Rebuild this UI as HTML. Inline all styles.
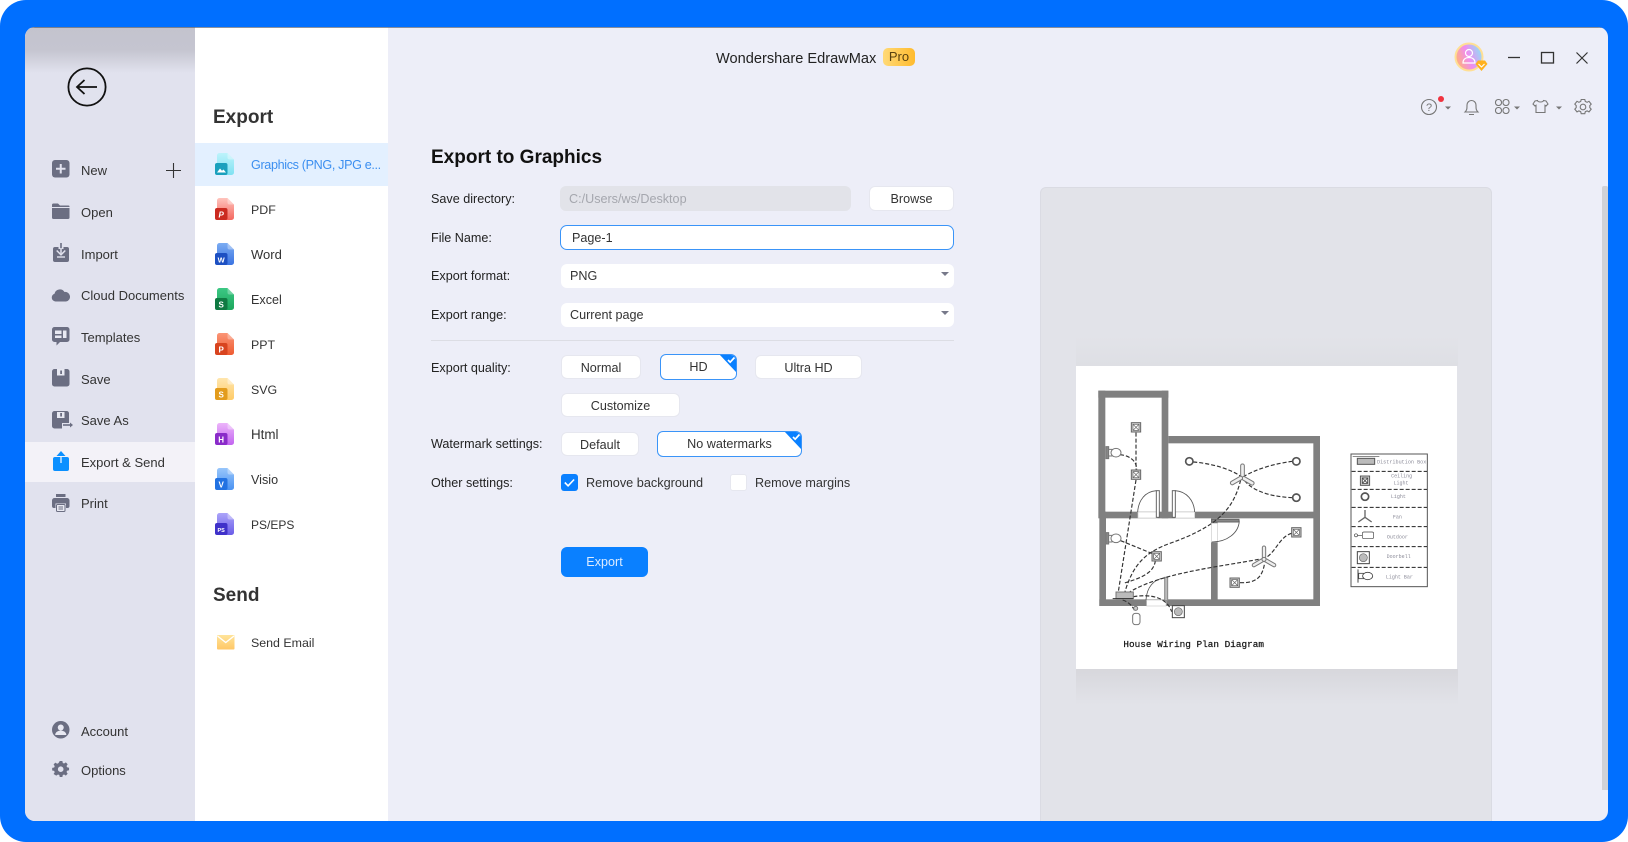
<!DOCTYPE html>
<html><head><meta charset="utf-8"><title>Export to Graphics</title>
<style>
html,body{margin:0;padding:0;background:#fff}
body{width:1628px;height:842px;overflow:hidden;position:relative;font-family:"Liberation Sans","DejaVu Sans",sans-serif;color:#333}
#frame{position:absolute;left:0;top:0;width:1628px;height:842px;background:#006fff;border-radius:26px}
#win{position:absolute;left:25px;top:27px;width:1583px;height:794px;background:#edeef8;border-radius:10px;overflow:hidden}
.a{position:absolute}
.t{position:absolute;white-space:nowrap;line-height:20px;height:20px;font-size:13px;color:#333}
.l{font-size:12.6px;color:#222}
.btn{position:absolute;box-sizing:border-box;background:#fff;border:1px solid #e6e7ef;border-radius:6px;text-align:center;font-size:12.6px;color:#333;line-height:24px}
.sel{border:1.5px solid #3a94f8;line-height:25px}
.c{position:absolute;right:-1px;top:-1px;width:0;height:0;border-style:solid;border-width:0 18px 19px 0;border-color:transparent #0a80ff transparent transparent}
svg{position:absolute;overflow:visible}
</style></head><body>
<div id="frame"></div>
<div id="win">
<div class="a" style="left:0;top:0;width:170px;height:794px;background:#e1e2ee"></div>
<div class="a" style="left:0;top:0;width:170px;height:46px;background:linear-gradient(#c3c3ce 0,#c5c5d0 50%,#e1e2ee 100%)"></div>
<div class="a" style="left:0;top:415px;width:170px;height:40px;background:#f3f2f8"></div>
<div class="a" style="left:170px;top:0;width:193px;height:794px;background:#fff"></div>
<div class="a" style="left:170px;top:116px;width:193px;height:43px;background:#e3f0ff"></div>
<div class="a" style="left:1015px;top:160px;width:452px;height:640px;box-sizing:border-box;background:#e2e3e9;border:1px solid #dadbe3;border-radius:6px 6px 0 0"></div>
<div class="a" style="left:1051px;top:309px;width:382px;height:30px;background:linear-gradient(to top,#dedfe4,#e2e3e9)"></div>
<div class="a" style="left:1051px;top:642px;width:382px;height:36px;background:linear-gradient(#d7d7dc,#e2e3e9)"></div>
<div class="a" style="left:1051px;top:339px;width:381px;height:303px;background:#fff"></div>
<div class="a" style="left:1577px;top:159px;width:6px;height:604px;background:#d0d1d6;border-radius:2px 2px 0 0"></div>
<div class="a" style="left:0;top:0;width:1583px;height:1px;background:#5b6473;opacity:.7"></div>
</div>

<!-- back -->
<svg style="left:67px;top:67px" width="40" height="40" viewBox="0 0 40 40" fill="none" stroke="#111"><circle cx="20" cy="20" r="18.600" stroke-width="1.800"/><path d="M30 20H10M17.500 13l-7.500 7 7.500 7" stroke-width="1.800"/></svg>

<!-- sidebar icons -->
<svg style="left:52px;top:160px" width="18" height="18" viewBox="0 0 18 18"><rect width="17.500" height="17.500" rx="3" fill="#6b6e82"/><path d="M8.750 4v9.500M4 8.750h9.500" stroke="#e1e2ee" stroke-width="2"/></svg>
<svg style="left:166px;top:163px" width="15" height="15" viewBox="0 0 15 15"><path d="M7.500 0v15M0 7.500h15" stroke="#333" stroke-width="1.100"/></svg>
<svg style="left:52px;top:203px" width="18" height="16" viewBox="0 0 18 16"><path d="M0 2a1.500 1.500 0 0 1 1.500-1.500H6l2 2h8.500A1 1 0 0 1 17.500 3.500V4H0z" fill="#6b6e82"/><path d="M0 5h17.500v9.500a1.500 1.500 0 0 1-1.500 1.500H1.500A1.500 1.500 0 0 1 0 14.500z" fill="#6b6e82"/></svg>
<svg style="left:53px;top:243px" width="16" height="19" viewBox="0 0 16 19"><path d="M2 4h12a2 2 0 0 1 2 2v11a2 2 0 0 1-2 2H2a2 2 0 0 1-2-2V6a2 2 0 0 1 2-2z" fill="#6b6e82"/><path d="M5.500 0h5v6h-5z" fill="#e1e2ee"/><path d="M3.700 7.500L8 11.800l4.300-4.300" fill="none" stroke="#e1e2ee" stroke-width="1.500"/><path d="M8 0v10.500" stroke="#6b6e82" stroke-width="1.600"/><path d="M8 5v6" stroke="#e1e2ee" stroke-width="1.500"/><path d="M4 14h8" stroke="#e1e2ee" stroke-width="1.400"/></svg>
<svg style="left:51px;top:287px" width="19" height="15" viewBox="0 0 19 15"><path d="M4.500 14.500A4 4 0 0 1 3.500 6.700 5.500 5.500 0 0 1 13.500 5 4.800 4.800 0 0 1 15 14.500z" fill="#6b6e82"/></svg>
<svg style="left:52px;top:327px" width="18" height="19" viewBox="0 0 18 19"><path d="M2.500 0h12.500A2.500 2.500 0 0 1 17.500 2.500v10A2.500 2.500 0 0 1 15 15H8l-3.500 3.500V15H2.500A2.500 2.500 0 0 1 0 12.500v-10A2.500 2.500 0 0 1 2.500 0z" fill="#6b6e82"/><path d="M3 3.500h6.500v3.500H3zM11 3.500h3.500v7.500H11zM3 8.500h6.500v2.500H3z" fill="#e8e9f2"/></svg>
<svg style="left:52px;top:369px" width="18" height="18" viewBox="0 0 18 18"><path d="M2.500 0h12.500A2.500 2.500 0 0 1 17.500 2.500V15A2.500 2.500 0 0 1 15 17.500H2.500A2.500 2.500 0 0 1 0 15V2.500A2.500 2.500 0 0 1 2.500 0z" fill="#6b6e82"/><path d="M5 0h7.500v6.500H5z" fill="#e8e9f2"/><path d="M8.200 1.500h1.800v3.500H8.200z" fill="#6b6e82"/></svg>
<svg style="left:52px;top:411px" width="21" height="18" viewBox="0 0 21 18"><path d="M2.500 0h12.500A2.500 2.500 0 0 1 17 2v10h-7v5.500H2.500A2.500 2.500 0 0 1 0 15V2.500A2.500 2.500 0 0 1 2.500 0z" fill="#6b6e82"/><path d="M5 1h7.500v6H5z" fill="#e8e9f2"/><path d="M8.200 2h1.800v3.500H8.200z" fill="#6b6e82"/><path d="M11 14h7" stroke="#6b6e82" stroke-width="1.600"/><path d="M18 11.500l3 2.500-3 2.500z" fill="#6b6e82"/></svg>
<svg style="left:53px;top:451px" width="16" height="20" viewBox="0 0 16 20"><path d="M2 6h12a2 2 0 0 1 2 2v10a2 2 0 0 1-2 2H2a2 2 0 0 1-2-2V8a2 2 0 0 1 2-2z" fill="#0a90ff"/><path d="M8 0L3.500 5H12.500z" fill="#0a90ff"/><path d="M8 5v7" stroke="#e8f4ff" stroke-width="1.300"/></svg>
<svg style="left:52px;top:494px" width="18" height="18" viewBox="0 0 18 18"><path d="M4 0h9.500v3H4z" fill="#6b6e82"/><path d="M2.500 4h12.500A2.500 2.500 0 0 1 17.500 6.500V12a2 2 0 0 1-2 2H14V9.500H3.500V14H2a2 2 0 0 1-2-2V6.500A2.500 2.500 0 0 1 2.500 4z" fill="#6b6e82"/><rect x="4.500" y="10.500" width="8.500" height="7" rx="1" fill="#e8e9f2" stroke="#6b6e82" stroke-width="1"/><path d="M6.500 13h4.500M6.500 15h4.500" stroke="#6b6e82" stroke-width="1"/></svg>
<svg style="left:52px;top:721px" width="18" height="18" viewBox="0 0 18 18"><circle cx="8.750" cy="8.750" r="8.750" fill="#6b6e82"/><circle cx="8.750" cy="6.500" r="3" fill="#e8e9f2"/><path d="M3.200 14a5.500 4.500 0 0 1 11.100 0z" fill="#e8e9f2"/></svg>
<svg style="left:52px;top:761px" width="18" height="18" viewBox="0 0 18 18"><path d="M7.300 0h3l.5 2.300 1.500.6 2-1.300 2.100 2.100-1.300 2 .6 1.500 2.300.5v3l-2.300.5-.6 1.500 1.300 2-2.100 2.100-2-1.300-1.500.6-.5 2.300h-3l-.5-2.300-1.500-.6-2 1.300L.2 14.900l1.300-2-.6-1.500L-1.400 10.900v-3l2.300-.5.6-1.500-1.300-2L2.300 1.800l2 1.300 1.500-.6z" transform="translate(1.400 0) scale(.87)" fill="#6b6e82"/><circle cx="8.700" cy="8.200" r="2.800" fill="#e1e2ee"/></svg>

<!-- sidebar text -->
<div class="t" style="left:81px;top:161px">New</div>
<div class="t" style="left:81px;top:203px">Open</div>
<div class="t" style="left:81px;top:245px">Import</div>
<div class="t" style="left:81px;top:286px">Cloud Documents</div>
<div class="t" style="left:81px;top:328px">Templates</div>
<div class="t" style="left:81px;top:370px">Save</div>
<div class="t" style="left:81px;top:411px">Save As</div>
<div class="t" style="left:81px;top:453px">Export &amp; Send</div>
<div class="t" style="left:81px;top:494px">Print</div>
<div class="t" style="left:81px;top:722px;font-size:13px">Account</div>
<div class="t" style="left:81px;top:761px">Options</div>

<!-- export panel -->
<div class="t" style="left:213px;top:108px;font-size:19px;font-weight:bold;color:#333">Export</div>
<div class="t" style="left:213px;top:586px;font-size:19px;font-weight:bold;color:#333">Send</div>

<svg style="left:215px;top:153px" width="20" height="22" viewBox="0 0 20 22"><defs><linearGradient id="g1" x1="0" y1="0" x2="0" y2="1"><stop offset="0" stop-color="#bdf3fb"/><stop offset="1" stop-color="#7fe1f2"/></linearGradient></defs><path d="M2 2.500a2.500 2.500 0 0 1 2.500-2.500h8l6.500 6.500V19.500a2.500 2.500 0 0 1-2.500 2.500H2z" fill="url(#g1)"/><path d="M12.500 0l6.500 6.500h-4.500a2 2 0 0 1-2-2z" fill="#fff" opacity=".35"/><rect x="0" y="10" width="12.500" height="12" rx="2" fill="#1aa0bd"/><path d="M2 19.500l3-4 2 2.300 1.500-1.300 2.500 3z" fill="#fff"/></svg>
<svg style="left:215px;top:198px" width="20" height="22" viewBox="0 0 20 22"><defs><linearGradient id="g2" x1="0" y1="0" x2="0" y2="1"><stop offset="0" stop-color="#ffc4bd"/><stop offset="1" stop-color="#f4675f"/></linearGradient></defs><path d="M2 2.500a2.500 2.500 0 0 1 2.500-2.500h8l6.500 6.500V19.500a2.500 2.500 0 0 1-2.500 2.500H2z" fill="url(#g2)"/><path d="M12.500 0l6.500 6.500h-4.500a2 2 0 0 1-2-2z" fill="#fff" opacity=".35"/><rect x="0" y="10" width="12.500" height="12" rx="2" fill="#cb2a20"/><text x="6.200" y="19.500" font-size="8" fill="#fff" text-anchor="middle" font-weight="bold" font-style="italic">P</text></svg>
<svg style="left:215px;top:243px" width="20" height="22" viewBox="0 0 20 22"><defs><linearGradient id="g3" x1="0" y1="0" x2="0" y2="1"><stop offset="0" stop-color="#7bacf2"/><stop offset="1" stop-color="#3a73e2"/></linearGradient></defs><path d="M2 2.500a2.500 2.500 0 0 1 2.500-2.500h8l6.500 6.500V19.500a2.500 2.500 0 0 1-2.500 2.500H2z" fill="url(#g3)"/><path d="M12.500 0l6.500 6.500h-4.500a2 2 0 0 1-2-2z" fill="#fff" opacity=".35"/><rect x="0" y="10" width="12.500" height="12" rx="2" fill="#1d50c2"/><text x="6.200" y="19.500" font-size="7.500" fill="#fff" text-anchor="middle" font-weight="bold">W</text></svg>
<svg style="left:215px;top:288px" width="20" height="22" viewBox="0 0 20 22"><defs><linearGradient id="g4" x1="0" y1="0" x2="0" y2="1"><stop offset="0" stop-color="#3cc884"/><stop offset="1" stop-color="#1ca65c"/></linearGradient></defs><path d="M2 2.500a2.500 2.500 0 0 1 2.500-2.500h8l6.500 6.500V19.500a2.500 2.500 0 0 1-2.500 2.500H2z" fill="url(#g4)"/><path d="M12.500 0l6.500 6.500h-4.500a2 2 0 0 1-2-2z" fill="#fff" opacity=".3"/><rect x="0" y="10" width="12.500" height="12" rx="2" fill="#0f7a42"/><text x="6.200" y="19.500" font-size="8" fill="#fff" text-anchor="middle" font-weight="bold">S</text></svg>
<svg style="left:215px;top:333px" width="20" height="22" viewBox="0 0 20 22"><defs><linearGradient id="g5" x1="0" y1="0" x2="0" y2="1"><stop offset="0" stop-color="#fb9576"/><stop offset="1" stop-color="#ee5a30"/></linearGradient></defs><path d="M2 2.500a2.500 2.500 0 0 1 2.500-2.500h8l6.500 6.500V19.500a2.500 2.500 0 0 1-2.500 2.500H2z" fill="url(#g5)"/><path d="M12.500 0l6.500 6.500h-4.500a2 2 0 0 1-2-2z" fill="#fff" opacity=".3"/><rect x="0" y="10" width="12.500" height="12" rx="2" fill="#d8441f"/><text x="6.200" y="19.500" font-size="8" fill="#fff" text-anchor="middle" font-weight="bold">P</text></svg>
<svg style="left:215px;top:378px" width="20" height="22" viewBox="0 0 20 22"><defs><linearGradient id="g6" x1="0" y1="0" x2="0" y2="1"><stop offset="0" stop-color="#ffe6ae"/><stop offset="1" stop-color="#ffcb66"/></linearGradient></defs><path d="M2 2.500a2.500 2.500 0 0 1 2.500-2.500h8l6.500 6.500V19.500a2.500 2.500 0 0 1-2.500 2.500H2z" fill="url(#g6)"/><path d="M12.500 0l6.500 6.500h-4.500a2 2 0 0 1-2-2z" fill="#fff" opacity=".4"/><rect x="0" y="10" width="12.500" height="12" rx="2" fill="#e39c1c"/><text x="6.200" y="19.500" font-size="8" fill="#fff" text-anchor="middle" font-weight="bold">S</text></svg>
<svg style="left:215px;top:423px" width="20" height="22" viewBox="0 0 20 22"><defs><linearGradient id="g7" x1="0" y1="0" x2="0" y2="1"><stop offset="0" stop-color="#ecb4fa"/><stop offset="1" stop-color="#c264f0"/></linearGradient></defs><path d="M2 2.500a2.500 2.500 0 0 1 2.500-2.500h8l6.500 6.500V19.500a2.500 2.500 0 0 1-2.500 2.500H2z" fill="url(#g7)"/><path d="M12.500 0l6.500 6.500h-4.500a2 2 0 0 1-2-2z" fill="#fff" opacity=".35"/><rect x="0" y="10" width="12.500" height="12" rx="2" fill="#8a2bc9"/><text x="6.200" y="19.500" font-size="8" fill="#fff" text-anchor="middle" font-weight="bold">H</text></svg>
<svg style="left:215px;top:468px" width="20" height="22" viewBox="0 0 20 22"><defs><linearGradient id="g8" x1="0" y1="0" x2="0" y2="1"><stop offset="0" stop-color="#98c6fb"/><stop offset="1" stop-color="#4a92f2"/></linearGradient></defs><path d="M2 2.500a2.500 2.500 0 0 1 2.500-2.500h8l6.500 6.500V19.500a2.500 2.500 0 0 1-2.500 2.500H2z" fill="url(#g8)"/><path d="M12.500 0l6.500 6.500h-4.500a2 2 0 0 1-2-2z" fill="#fff" opacity=".35"/><rect x="0" y="10" width="12.500" height="12" rx="2" fill="#2272e2"/><text x="6.200" y="19.500" font-size="8" fill="#fff" text-anchor="middle" font-weight="bold">V</text></svg>
<svg style="left:215px;top:513px" width="20" height="22" viewBox="0 0 20 22"><defs><linearGradient id="g9" x1="0" y1="0" x2="0" y2="1"><stop offset="0" stop-color="#aba4f9"/><stop offset="1" stop-color="#6a5ce8"/></linearGradient></defs><path d="M2 2.500a2.500 2.500 0 0 1 2.500-2.500h8l6.500 6.500V19.500a2.500 2.500 0 0 1-2.500 2.500H2z" fill="url(#g9)"/><path d="M12.500 0l6.500 6.500h-4.500a2 2 0 0 1-2-2z" fill="#fff" opacity=".35"/><rect x="0" y="10" width="12.500" height="12" rx="2" fill="#3f31c9"/><text x="6.200" y="18.800" font-size="5.500" fill="#fff" text-anchor="middle" font-weight="bold">PS</text></svg>
<svg style="left:217px;top:635px" width="18" height="15" viewBox="0 0 18 15"><defs><linearGradient id="g10" x1="0" y1="0" x2="0" y2="1"><stop offset="0" stop-color="#ffe49a"/><stop offset="1" stop-color="#ffc766"/></linearGradient></defs><rect width="17.500" height="14.500" rx="1" fill="url(#g10)"/><path d="M.5 1L8.750 7.500 17 1" fill="none" stroke="#fff" stroke-width="1.300"/></svg>

<div class="t" style="left:251px;top:155px;color:#3c8ff0;font-size:12.6px;letter-spacing:-.35px">Graphics (PNG, JPG e...</div>
<div class="t" style="left:251px;top:200px;font-size:12.4px">PDF</div>
<div class="t" style="left:251px;top:245px">Word</div>
<div class="t" style="left:251px;top:290px;font-size:12.6px">Excel</div>
<div class="t" style="left:251px;top:335px;font-size:12.4px">PPT</div>
<div class="t" style="left:251px;top:380px;font-size:12.4px">SVG</div>
<div class="t" style="left:251px;top:425px;font-size:13.4px">Html</div>
<div class="t" style="left:251px;top:470px;font-size:12.6px">Visio</div>
<div class="t" style="left:251px;top:515px;font-size:12px">PS/EPS</div>
<div class="t" style="left:251px;top:633px;font-size:12.4px">Send Email</div>

<!-- title bar -->
<div class="t" style="left:716px;top:49px;font-size:14.6px;color:#222">Wondershare EdrawMax</div>
<div class="a" style="left:883px;top:48px;width:32px;height:18px;border-radius:5px;background:linear-gradient(90deg,#ffd977,#ffbb2e);text-align:center;font-size:13px;line-height:18px;color:#5a4210">Pro</div>

<svg style="left:1453px;top:41px" width="36" height="34" viewBox="0 0 36 34"><defs><linearGradient id="av" x1="0" y1=".6" x2="1" y2=".2"><stop offset="0" stop-color="#ffb07a"/><stop offset=".45" stop-color="#f08cf0"/><stop offset="1" stop-color="#86e6f7"/></linearGradient></defs><circle cx="16" cy="16" r="13.500" fill="url(#av)" stroke="#ffdf94" stroke-width="2"/><circle cx="16" cy="12" r="3.500" fill="none" stroke="#fff" stroke-width="1.200"/><path d="M10 22c0-4 3-5.500 6-5.500s6 1.500 6 5.500z" fill="none" stroke="#fff" stroke-width="1.200"/><path d="M25 19.500h7l2.500 3.500-6 7-6-7z" fill="#ffb11f"/><path d="M25.500 23l3 3 3-3" fill="none" stroke="#fff" stroke-width="1.100"/></svg>
<svg style="left:1505px;top:48px" width="90" height="20" viewBox="0 0 90 20" fill="none" stroke="#333"><path d="M3 9.500H15" stroke-width="1.300"/><rect x="36.500" y="4.500" width="12" height="10.500" stroke-width="1.300"/><path d="M71.500 4.500l11 11M82.500 4.500l-11 11" stroke-width="1.200"/></svg>

<svg style="left:1420px;top:94px" width="176" height="24" viewBox="0 0 176 24" fill="none" stroke="#777"><circle cx="9" cy="13" r="7.500" stroke-width="1.100"/><text x="9" y="17" font-size="11" fill="#777" stroke="none" text-anchor="middle">?</text><circle cx="21" cy="5" r="3" fill="#f0333f" stroke="none"/><path d="M25 12.500h6l-3 3z" fill="#777" stroke="none"/><path d="M45 18c2-2 2-3 2-7a4.500 4.500 0 0 1 9 0c0 4 0 5 2 7zM49 20.500h5" stroke-width="1.100"/><rect x="75.500" y="5.500" width="6" height="6" rx="2.800" stroke-width="1.100"/><rect x="83" y="5.500" width="6" height="6" rx="2.800" stroke-width="1.100"/><rect x="75.500" y="13.500" width="6" height="6" rx="2.800" stroke-width="1.100"/><rect x="83" y="13.500" width="6" height="6" rx="2.800" stroke-width="1.100"/><path d="M94 12.500h6l-3 3z" fill="#777" stroke="none"/><path d="M117.500 6.500l-2.500.5-2 3 2 2 1-.7v7.200h9v-7.200l1 .7 2-2-2-3-2.500-.5c-.5 2-5.500 2-6 0z" stroke-width="1.100"/><path d="M136 12.500h6l-3 3z" fill="#777" stroke="none"/><g transform="translate(163 13)"><path d="M-1.800-7.500h3.600l.5 2 1.800.8 1.900-1 2.200 2.800-1.400 1.500v2l1.400 1.500-2.200 2.800-1.900-1-1.800.8-.5 2h-3.600l-.5-2-1.800-.8-1.900 1-2.200-2.800 1.400-1.500v-2l-1.400-1.500 2.200-2.800 1.900 1 1.800-.8z" stroke-width="1.100"/><circle r="2.800" stroke-width="1.100"/></g></svg>

<!-- form -->
<div class="t" style="left:431px;top:148px;font-size:19px;font-weight:bold;color:#111">Export to Graphics</div>
<div class="t l" style="left:431px;top:189px">Save directory:</div>
<div class="t l" style="left:431px;top:228px">File Name:</div>
<div class="t l" style="left:431px;top:266px">Export format:</div>
<div class="t l" style="left:431px;top:305px">Export range:</div>
<div class="t l" style="left:431px;top:358px">Export quality:</div>
<div class="t l" style="left:431px;top:434px">Watermark settings:</div>
<div class="t l" style="left:431px;top:473px">Other settings:</div>

<div class="a" style="left:560px;top:186px;width:291px;height:25px;background:#e2e3e9;border-radius:6px"></div>
<div class="t" style="left:569px;top:189px;font-size:12.6px;color:#a5a7ae">C:/Users/ws/Desktop</div>
<div class="btn" style="left:869px;top:186px;width:85px;height:25px;line-height:25px">Browse</div>
<div class="a" style="left:560px;top:225px;width:394px;height:25px;box-sizing:border-box;background:#fff;border:1.5px solid #3a94f8;border-radius:7px"></div>
<div class="t" style="left:572px;top:228px;font-size:12.6px;color:#333">Page-1</div>
<div class="a" style="left:561px;top:264px;width:393px;height:24px;background:#fff;border:0;border-radius:6px"></div>
<div class="t" style="left:570px;top:266px;font-size:12.6px">PNG</div>
<div class="a" style="left:941px;top:272px;width:0;height:0;border-style:solid;border-width:4px 4px 0 4px;border-color:#77798a transparent transparent transparent"></div>
<div class="a" style="left:561px;top:303px;width:393px;height:24px;background:#fff;border-radius:6px"></div>
<div class="t" style="left:570px;top:305px;font-size:12.6px">Current page</div>
<div class="a" style="left:941px;top:311px;width:0;height:0;border-style:solid;border-width:4px 4px 0 4px;border-color:#77798a transparent transparent transparent"></div>
<div class="a" style="left:431px;top:340px;width:523px;height:1px;background:#dcdde4"></div>

<div class="btn" style="left:561px;top:355px;width:80px;height:24px">Normal</div>
<div class="btn sel" style="left:660px;top:354px;width:77px;height:26px;overflow:hidden">HD<span class="c"></span></div>
<svg style="left:725px;top:355px" width="12" height="10" viewBox="0 0 12 10"><path d="M3 5l2.200 2.200L9.500 2.500" fill="none" stroke="#fff" stroke-width="1.700"/></svg>
<div class="btn" style="left:755px;top:355px;width:107px;height:24px">Ultra HD</div>
<div class="btn" style="left:561px;top:393px;width:119px;height:24px">Customize</div>
<div class="btn" style="left:561px;top:432px;width:78px;height:24px">Default</div>
<div class="btn sel" style="left:657px;top:431px;width:145px;height:26px;overflow:hidden">No watermarks<span class="c"></span></div>
<svg style="left:790px;top:432px" width="12" height="10" viewBox="0 0 12 10"><path d="M3 5l2.200 2.200L9.500 2.500" fill="none" stroke="#fff" stroke-width="1.700"/></svg>

<svg style="left:561px;top:474px" width="17" height="17" viewBox="0 0 17 17"><rect width="17" height="17" rx="3" fill="#0a80ff"/><path d="M3.800 8.500l3.300 3.300 6-6.300" fill="none" stroke="#fff" stroke-width="1.600"/></svg>
<div class="t" style="left:586px;top:473px;font-size:12.7px">Remove background</div>
<div class="a" style="left:730px;top:474px;width:17px;height:17px;box-sizing:border-box;background:#fff;border:1px solid #e6e7ef;border-radius:3px"></div>
<div class="t" style="left:755px;top:473px;font-size:12.6px">Remove margins</div>
<div class="a" style="left:561px;top:547px;width:87px;height:30px;background:#0a80ff;border-radius:6px;text-align:center;line-height:30px;font-size:12.6px;color:#dcebff">Export</div>

<!-- floor plan -->
<svg style="left:1070px;top:370px;filter:blur(.3px)" width="400" height="300" viewBox="0 0 1200 900">
<g fill="#808080">
<rect x="85" y="62" width="210" height="21"/><rect x="85" y="62" width="21" height="383"/><rect x="275" y="62" width="20" height="383"/>
<rect x="295" y="198" width="455" height="22"/><rect x="730" y="198" width="20" height="510"/>
<rect x="88" y="425" width="662" height="20"/><rect x="88" y="425" width="20" height="283"/><rect x="88" y="688" width="662" height="20"/><rect x="423" y="445" width="20" height="263"/>
</g>
<g fill="#fff" stroke="#ccc" stroke-width="2">
<rect x="204" y="426" width="58" height="18"/><rect x="316" y="426" width="58" height="18"/><rect x="230" y="690" width="58" height="18"/><rect x="424" y="460" width="19" height="56"/>
</g>
<g fill="#fff" stroke="#666" stroke-width="3">
<rect x="259" y="362" width="9" height="80"/><rect x="307" y="362" width="9" height="80"/><rect x="284" y="622" width="9" height="70" fill="#bbb" stroke="#888"/><rect x="425" y="448" width="82" height="8" fill="#888"/>
</g>
<g fill="none" stroke="#555" stroke-width="2.500">
<path d="M259 362C225 364 205 392 203 426"/><path d="M316 362C350 364 372 392 374 426"/><path d="M284 624C252 626 230 652 228 690"/><path d="M508 452C506 490 470 516 426 516"/>
</g>
<g fill="none" stroke="#333" stroke-width="3.500" stroke-dasharray="12 6">
<path d="M198 188V298"/><path d="M150 254C175 256 200 270 200 298"/>
<path d="M370 276C420 280 480 295 517 322"/><path d="M667 274C620 280 560 295 517 322"/><path d="M667 383C600 380 540 362 517 322"/>
<path d="M512 330C490 420 440 470 300 520C230 545 190 580 165 665"/>
<path d="M198 330L145 665"/><path d="M152 512L245 550"/><path d="M256 572C252 610 210 625 160 640"/>
<path d="M566 568C450 590 260 610 170 672"/><path d="M665 490C630 500 620 540 592 560"/><path d="M510 638C560 640 578 620 584 578"/>
<path d="M190 680C240 672 290 680 305 725"/><path d="M158 690C175 695 190 710 195 725"/>
</g>
<g fill="#d8d8d8" stroke="#666" stroke-width="3">
<g transform="translate(198 172)"><rect x="-14" y="-14" width="28" height="28" fill="#ccc"/><rect x="-9" y="-9" width="18" height="18" fill="#fff" stroke-width="2"/><path d="M-9-9L9 9M9-9L-9 9" stroke-width="2"/></g>
<g transform="translate(198 314)"><rect x="-14" y="-14" width="28" height="28" fill="#ccc"/><rect x="-9" y="-9" width="18" height="18" fill="#fff" stroke-width="2"/><path d="M-9-9L9 9M9-9L-9 9" stroke-width="2"/></g>
<g transform="translate(260 559)"><rect x="-14" y="-14" width="28" height="28" fill="#ccc"/><rect x="-9" y="-9" width="18" height="18" fill="#fff" stroke-width="2"/><path d="M-9-9L9 9M9-9L-9 9" stroke-width="2"/></g>
<g transform="translate(679 487)"><rect x="-14" y="-14" width="28" height="28" fill="#ccc"/><rect x="-9" y="-9" width="18" height="18" fill="#fff" stroke-width="2"/><path d="M-9-9L9 9M9-9L-9 9" stroke-width="2"/></g>
<g transform="translate(494 638)"><rect x="-14" y="-14" width="28" height="28" fill="#ccc"/><rect x="-9" y="-9" width="18" height="18" fill="#fff" stroke-width="2"/><path d="M-9-9L9 9M9-9L-9 9" stroke-width="2"/></g>
</g>
<g fill="#fff" stroke="#555" stroke-width="5"><circle cx="358" cy="274" r="11"/><circle cx="679" cy="274" r="11"/><circle cx="679" cy="383" r="11"/></g>
<g fill="#eee" stroke="#777" stroke-width="3">
<g transform="translate(517 322)"><rect x="-5" y="-40" width="11" height="40" rx="5"/><rect x="-5" y="-40" width="11" height="40" rx="5" transform="rotate(120)"/><rect x="-5" y="-40" width="11" height="40" rx="5" transform="rotate(240)"/></g>
<g transform="translate(582 568)"><rect x="-5" y="-40" width="10" height="40" rx="5"/><rect x="-5" y="-40" width="10" height="40" rx="5" transform="rotate(120)"/><rect x="-5" y="-40" width="10" height="40" rx="5" transform="rotate(240)"/><circle r="6"/></g>
<path d="M108 230h8v36h-8z" fill="#888"/><path d="M116 238h10v20h-10z" fill="#fff"/><ellipse cx="138" cy="248" rx="15" ry="13" fill="#fff"/>
<path d="M108 488h8v34h-8z" fill="#888"/><path d="M116 496h10v20h-10z" fill="#fff"/><ellipse cx="138" cy="505" rx="15" ry="13" fill="#fff"/>
<rect x="138" y="666" width="52" height="20" fill="#bbb"/>
<rect x="188" y="730" width="22" height="34" rx="8" fill="#fff"/><circle cx="197" cy="715" r="6" fill="#ccc"/>
</g>
<path d="M128 686H190" stroke="#333" stroke-width="3"/>
<rect x="307" y="707" width="36" height="36" fill="#fff" stroke="#444" stroke-width="3"/><circle cx="325" cy="725" r="12" fill="#bbb" stroke="#666" stroke-width="2"/>
<text x="160" y="831" font-family="'Liberation Mono',monospace" font-size="28" fill="#111" stroke="#111" stroke-width=".6" textLength="422" lengthAdjust="spacingAndGlyphs">House Wiring Plan Diagram</text>

<rect x="843" y="252" width="229" height="398" fill="#fff" stroke="#555" stroke-width="3"/>
<g stroke="#222" stroke-width="3" stroke-dasharray="12 6"><path d="M845 304H1071M845 358H1071M845 412H1071M845 470H1071M845 530H1071M845 592H1071"/></g>
<g font-family="'Liberation Mono',monospace" font-size="15" fill="#8b8b98" text-anchor="middle">
<text x="995" y="281" textLength="148" lengthAdjust="spacingAndGlyphs">Distribution Box</text>
<text x="995" y="323">Ceiling</text><text x="993" y="343">Light</text>
<text x="985" y="384">Light</text><text x="982" y="445">Fan</text><text x="982" y="506">Outdoor</text><text x="986" y="564">Doorbell</text><text x="988" y="625">Light Bar</text>
</g>
<rect x="862" y="265" width="52" height="18" fill="#bbb" stroke="#555" stroke-width="3"/>
<path d="M848 259H928" stroke="#444" stroke-width="2"/>
<g transform="translate(885 332)" fill="#ccc" stroke="#444" stroke-width="2.500"><rect x="-14" y="-14" width="28" height="28"/><rect x="-8" y="-8" width="16" height="16" fill="#fff"/><path d="M-8-8L8 8M8-8L-8 8"/></g>
<circle cx="885" cy="380" r="11" fill="#fff" stroke="#555" stroke-width="5"/>
<g transform="translate(885 442)" fill="none" stroke="#666" stroke-width="4"><path d="M0 0V-22M0 0L-20 14M0 0L20 14"/></g>
<g fill="#fff" stroke="#444" stroke-width="2"><circle cx="858" cy="496" r="4.500"/><path d="M863 496H877"/><rect x="877" y="486" width="34" height="20" rx="5"/></g>
<rect x="862" y="545" width="36" height="36" fill="#fff" stroke="#444" stroke-width="3"/><circle cx="880" cy="563" r="12" fill="#bbb" stroke="#666" stroke-width="2"/>
<g fill="#fff" stroke="#444" stroke-width="2.500"><path d="M864 598V638" stroke-width="3"/><rect x="866" y="610" width="14" height="16"/><ellipse cx="893" cy="618" rx="15" ry="11"/></g>
</svg>
</body></html>
